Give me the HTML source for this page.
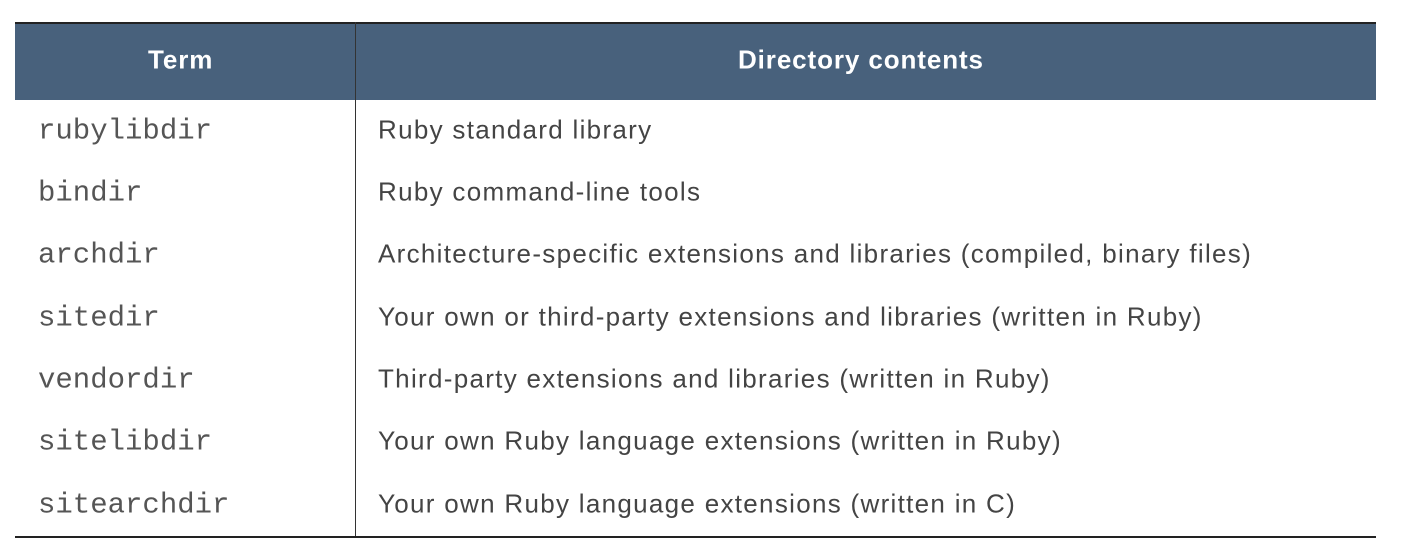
<!DOCTYPE html>
<html><head><style>
body{margin:0;width:1406px;height:552px;background:#fff;position:relative;overflow:hidden}
.hdr{position:absolute;left:15px;top:22px;width:1361px;height:78px;background:#48617c;border-top:2px solid #222;box-sizing:border-box}
.h{position:absolute;top:60px;transform:translateY(-50%);color:#fff;font:bold 26px "Liberation Sans",sans-serif;letter-spacing:0.9px}
.vl{position:absolute;left:355px;top:22px;width:1px;height:515px;background:#333}
.bl{position:absolute;left:15px;top:536px;width:1361px;height:2px;background:#222}
.t{position:absolute;left:38px;font:29px "Liberation Mono",monospace;color:#555;transform:translateY(-50%)}
.d{position:absolute;left:378px;font:26px "Liberation Sans",sans-serif;color:#444;transform:translateY(-50%);white-space:nowrap;letter-spacing:1.3px}
</style></head><body>
<div class="hdr"></div>
<div class="vl"></div>
<div class="h" style="left:148px">Term</div>
<div class="h" style="left:738px">Directory contents</div>
<div class="t" style="top:131px">rubylibdir</div><div class="d" style="top:130px">Ruby standard library</div>
<div class="t" style="top:193px">bindir</div><div class="d" style="top:192px">Ruby command-line tools</div>
<div class="t" style="top:255px">archdir</div><div class="d" style="top:254px">Architecture-specific extensions and libraries (compiled, binary files)</div>
<div class="t" style="top:318px">sitedir</div><div class="d" style="top:317px">Your own or third-party extensions and libraries (written in Ruby)</div>
<div class="t" style="top:380px">vendordir</div><div class="d" style="top:379px">Third-party extensions and libraries (written in Ruby)</div>
<div class="t" style="top:442px">sitelibdir</div><div class="d" style="top:441px">Your own Ruby language extensions (written in Ruby)</div>
<div class="t" style="top:505px">sitearchdir</div><div class="d" style="top:504px">Your own Ruby language extensions (written in C)</div>
<div class="bl"></div>
</body></html>
